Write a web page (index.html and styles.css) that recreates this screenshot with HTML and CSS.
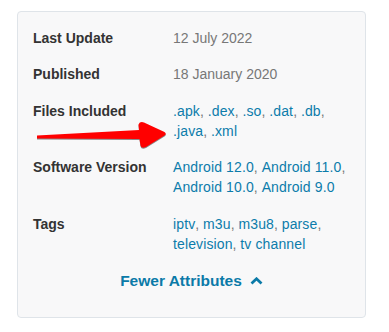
FILE: index.html
```html
<!DOCTYPE html>
<html>
<head>
    <title>Attributes</title>
    <link rel="stylesheet" href="styles.css">
</head>
<body>
    <div class="card">
        <div class="attributes">
            <div class="label">Last Update</div>
            <div class="value">12 July 2022</div>

            <div class="label">Published</div>
            <div class="value">18 January 2020</div>

            <div class="label">Files Included</div>
            <div class="value"><a href="#">.apk</a>, <a href="#">.dex</a>, <a href="#">.so</a>, <a href="#">.dat</a>, <a href="#">.db</a>, <a href="#">.java</a>, <a href="#">.xml</a></div>

            <div class="label">Software Version</div>
            <div class="value"><a href="#">Android 12.0</a>, <a href="#">Android 11.0</a>, <a href="#">Android 10.0</a>, <a href="#">Android 9.0</a></div>

            <div class="label">Tags</div>
            <div class="value"><a href="#">iptv</a>, <a href="#">m3u</a>, <a href="#">m3u8</a>, <a href="#">parse</a>, <a href="#">television</a>, <a href="#">tv channel</a></div>
        </div>
        <a class="toggle" href="#">Fewer Attributes
            <svg width="13" height="8" viewBox="0 0 13 8"><path d="M1.5 6.5 L6.5 1.8 L11.5 6.5" fill="none" stroke="currentColor" stroke-width="2.8"/></svg>
        </a>

        <!-- annotation arrow -->
        <svg class="arrow" width="389" height="332" viewBox="0 0 389 332">
            <path d="M37 135.5 L139 130 L138.5 124.5 Q140 121 144 122.5 L164.5 132 Q167 133.8 164.5 135.6 L146 147 Q141.5 149 140.5 145.5 L139.5 139 L37 138.6 Z" fill="#f00"/>
        </svg>
    </div>
</body>
</html>
```

FILE: styles.css
```css
body {
    margin: 0;
    background: #fff;
    font-family: "Liberation Sans", Arial, sans-serif;
    font-size: 14px;
}

.card {
    margin: 11px 0 0 17px;
    width: 347px;
    background: #f8f8f9;
    border: 1px solid #dfe4e9;
    border-radius: 4px;
    padding: 16px 0 26px 0;
}

.attributes {
    display: grid;
    grid-template-columns: 140px 1fr;
    row-gap: 16px;
    padding: 0 15px;
    line-height: 20.3px;
}

.label {
    font-weight: bold;
    color: #333;
}

.value {
    color: #777;
}

.value a {
    color: #0c7cab;
    text-decoration: none;
    letter-spacing: 0.12px;
}

.toggle {
    display: flex;
    justify-content: center;
    align-items: center;
    gap: 8px;
    margin-top: 17px;
    line-height: 20px;
    font-size: 15.5px;
    font-weight: bold;
    color: #0b7aa8;
    text-decoration: none;
}

.arrow {
    position: absolute;
    left: 0;
    top: 0;
    filter: drop-shadow(0.5px 1px 0.6px rgba(0, 0, 0, 0.45));
}
```
